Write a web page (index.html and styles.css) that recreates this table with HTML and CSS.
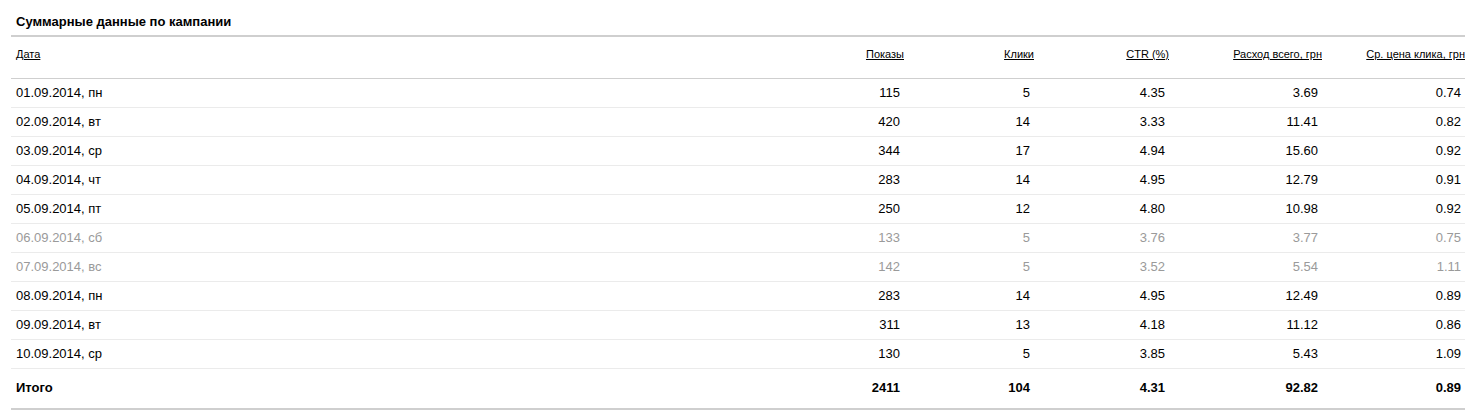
FILE: index.html
```html
<!DOCTYPE html>
<html lang="ru">
<head>
<meta charset="utf-8">
<title>Суммарные данные по кампании</title>
<link rel="stylesheet" href="styles.css">
</head>
<body>
<div class="panel">
  <h2 class="title">Суммарные данные по кампании</h2>
  <table class="stats">
    <colgroup>
      <col>
      <col class="c-shows">
      <col class="c-clicks">
      <col class="c-ctr">
      <col class="c-spend">
      <col class="c-cpc">
    </colgroup>
    <thead>
      <tr>
        <th class="left"><a href="#">Дата</a></th>
        <th><a href="#">Показы</a></th>
        <th><a href="#">Клики</a></th>
        <th><a href="#">CTR (%)</a></th>
        <th><a href="#">Расход всего, грн</a></th>
        <th><a href="#">Ср. цена клика, грн</a></th>
      </tr>
    </thead>
    <tbody>
      <tr><td class="left">01.09.2014, пн</td><td>115</td><td>5</td><td>4.35</td><td>3.69</td><td>0.74</td></tr>
      <tr><td class="left">02.09.2014, вт</td><td>420</td><td>14</td><td>3.33</td><td>11.41</td><td>0.82</td></tr>
      <tr><td class="left">03.09.2014, ср</td><td>344</td><td>17</td><td>4.94</td><td>15.60</td><td>0.92</td></tr>
      <tr><td class="left">04.09.2014, чт</td><td>283</td><td>14</td><td>4.95</td><td>12.79</td><td>0.91</td></tr>
      <tr><td class="left">05.09.2014, пт</td><td>250</td><td>12</td><td>4.80</td><td>10.98</td><td>0.92</td></tr>
      <tr class="weekend"><td class="left">06.09.2014, сб</td><td>133</td><td>5</td><td>3.76</td><td>3.77</td><td>0.75</td></tr>
      <tr class="weekend"><td class="left">07.09.2014, вс</td><td>142</td><td>5</td><td>3.52</td><td>5.54</td><td>1.11</td></tr>
      <tr><td class="left">08.09.2014, пн</td><td>283</td><td>14</td><td>4.95</td><td>12.49</td><td>0.89</td></tr>
      <tr><td class="left">09.09.2014, вт</td><td>311</td><td>13</td><td>4.18</td><td>11.12</td><td>0.86</td></tr>
      <tr><td class="left">10.09.2014, ср</td><td>130</td><td>5</td><td>3.85</td><td>5.43</td><td>1.09</td></tr>
    </tbody>
    <tfoot>
      <tr><td class="left">Итого</td><td>2411</td><td>104</td><td>4.31</td><td>92.82</td><td>0.89</td></tr>
    </tfoot>
  </table>
</div>
</body>
</html>
```
FILE: styles.css
```css
html, body {
  margin: 0;
  padding: 0;
  background: #fff;
}
body {
  font-family: "Liberation Sans", Arial, sans-serif;
  color: #000;
}
.panel {
  margin-left: 11px;
  width: 1454px;
}
.title {
  margin: 0;
  padding: 14px 0 5px 5px;
  font-size: 13px;
  line-height: 16px;
  font-weight: bold;
  color: #000;
  border-bottom: 2px solid #cfcfcf;
}
.stats {
  width: 100%;
  border-collapse: collapse;
  table-layout: fixed;
  font-size: 13px;
}
.c-shows { width: 130px; }
.c-clicks { width: 130px; }
.c-ctr { width: 135px; }
.c-spend { width: 153px; }
.c-cpc { width: 143px; }
.stats th {
  font-weight: normal;
  font-size: 11px;
  line-height: 13px;
  padding: 11px 0 17px 0;
  text-align: right;
  border-bottom: 1px solid #cfcfcf;
  white-space: nowrap;
}
.stats th a {
  color: #000;
  text-decoration: underline;
}
.stats th.left {
  text-align: left;
  padding-left: 5px;
}
.stats td {
  height: 28px;
  padding: 0 4px 0 0;
  line-height: 16px;
  text-align: right;
  border-bottom: 1px solid #ebebeb;
  white-space: nowrap;
}
.stats td.left {
  text-align: left;
  padding-left: 5px;
}
.stats .weekend td {
  color: #9a9a9a;
}
.stats tfoot td {
  height: 37px;
  padding-bottom: 2px;
  font-weight: bold;
  border-bottom: 2px solid #cfcfcf;
}
```
